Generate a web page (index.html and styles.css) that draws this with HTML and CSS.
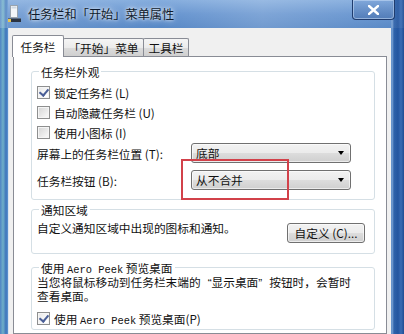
FILE: index.html
```html
<!DOCTYPE html>
<html lang="zh-CN">
<head>
<meta charset="utf-8">
<link rel="stylesheet" href="styles.css">
</head>
<body>
<div class="window">
  <div class="titlebar">
    <svg class="app-icon" width="13" height="18" viewBox="0 0 13 18">
      <rect x="2.5" y="0.5" width="7" height="12" fill="#f4f6f8" stroke="#9aa4ae"/>
      <rect x="3.5" y="1.5" width="5" height="2" fill="#cfd8e2"/>
      <rect x="0" y="13" width="13" height="4" fill="#2b3442"/>
      <rect x="0" y="13" width="3" height="4" fill="#e8c650"/>
      <rect x="0" y="13" width="13" height="1" fill="#5b6b80"/>
    </svg>
    <span class="title">任务栏和「开始」菜单属性</span>
    <div class="close">
      <svg width="11" height="10" viewBox="0 0 11 10"><path d="M1 1 L10 9 M10 1 L1 9" stroke="#fff" stroke-width="2.4" stroke-linecap="square"/></svg>
    </div>
  </div>
  <div class="client">
    <div class="tabs">
      <div class="tab active t1">任务栏</div>
      <div class="tab t2">「开始」菜单</div>
      <div class="tab t3">工具栏</div>
    </div>
    <div class="panel">
      <fieldset class="group g1">
        <legend>任务栏外观</legend>
        <div class="check-row"><span class="cb checked"></span><span>锁定任务栏 (L)</span></div>
        <div class="check-row"><span class="cb"></span><span>自动隐藏任务栏 (U)</span></div>
        <div class="check-row"><span class="cb"></span><span>使用小图标 (I)</span></div>
        <div class="select-row first"><span class="sel-label">屏幕上的任务栏位置 (T):</span><div class="select"><span>底部</span><span class="arrow"></span></div></div>
        <div class="select-row"><span class="sel-label">任务栏按钮 (B):</span><div class="select"><span>从不合并</span><span class="arrow"></span></div></div>
        <div class="highlight"></div>
      </fieldset>
      <fieldset class="group g2">
        <legend>通知区域</legend>
        <div class="notify-row">
          <span class="notify-text">自定义通知区域中出现的图标和通知。</span>
          <div class="button">自定义 (C)...</div>
        </div>
      </fieldset>
      <fieldset class="group g3">
        <legend>使用 <span class="mono">Aero Peek</span> 预览桌面</legend>
        <p class="desc">当您将鼠标移动到任务栏末端的<span class="ql">“</span>显示桌面<span class="qr">”</span>按钮时，会暂时<br>查看桌面。</p>
        <div class="check-row"><span class="cb checked"></span><span>使用 <span class="mono">Aero Peek</span> 预览桌面(P)</span></div>
      </fieldset>
    </div>
  </div>
</div>
</body>
</html>
```

FILE: styles.css
```css
* { box-sizing: border-box; }
html, body { margin: 0; padding: 0; }
body {
  width: 404px;
  height: 334px;
  overflow: hidden;
  font-family: "Noto Sans CJK SC", sans-serif;
  font-size: 11.7px;
  color: #111;
}
.window {
  height: 334px;
  display: flex;
  flex-direction: column;
  background:
    linear-gradient(90deg, #4f83c4 0px, #6fb0c8 3px, #3d74bb 6px, #5f95d0 8px, transparent 8px, transparent 391px, #7fa6d6 392px, #2e62aa 394px, #2456a0 398px, #3a6cb4 401px, #1f4d93 404px),
    linear-gradient(180deg, #7fa9dc 0px, #5f8fcd 14px, #4f82c3 28px, #4a7ec0 100%);
}
.titlebar {
  height: 28px;
  flex: none;
  display: flex;
  align-items: flex-start;
  padding-left: 8px;
  padding-right: 9px;
  background: linear-gradient(90deg, rgba(255,255,255,0.18), rgba(255,255,255,0.05) 40%, rgba(255,255,255,0.2) 65%, rgba(255,255,255,0.05));
}
.app-icon { margin-top: 5px; flex: none; }
.title {
  margin-left: 7px;
  margin-top: 6px;
  font-size: 12.2px;
  line-height: 16px;
  color: #0e1a2c;
  text-shadow: 0 0 6px rgba(255,255,255,0.9), 0 0 3px rgba(255,255,255,0.8);
}
.close {
  margin-left: auto;
  width: 43px;
  height: 20px;
  border: 1px solid #1f3c6e;
  border-top: none;
  border-radius: 0 0 4px 4px;
  box-shadow: inset 0 0 0 1px rgba(200,220,245,0.55);
  background: linear-gradient(180deg, rgba(120,160,215,0.5), rgba(70,110,170,0.6));
  display: flex;
  align-items: center;
  justify-content: center;
}
.close svg { margin-top: 1px; }
.client {
  flex: 1;
  margin: 0 13px 0 8px;
  background: #f0f0f0;
  padding: 7px 4px 0 4px;
  display: flex;
  flex-direction: column;
  border-left: 1px solid #d8e4f0;
}
.tabs {
  display: flex;
  align-items: flex-end;
  height: 21px;
  position: relative;
  z-index: 2;
}
.tab {
  height: 18px;
  border: 1px solid #898c95;
  border-bottom: none;
  margin-left: -1px;
  background: linear-gradient(180deg, #f5f5f5, #ebebeb 50%, #dcdcdc 51%, #cfcfcf);
  display: flex;
  align-items: center;
  justify-content: center;
  line-height: 14px;
  padding-top: 1px;
  border-radius: 2px 2px 0 0;
}
.tab.active {
  height: 22px;
  margin-bottom: -1px;
  background: #fff;
  padding-top: 0;
  margin-left: -1px;
  z-index: 3;
}
.t1 { width: 52px; }
.t2 { width: 81px; }
.t3 { width: 46px; }
.panel {
  flex: 1;
  border: 1px solid #898c95;
  background: #fff;
  padding: 6px 11px 0 17px;
  display: flex;
  flex-direction: column;
}
.group {
  margin: 0;
  border: 1px solid #d5dfe5;
  border-radius: 3px;
  padding: 0 9px 0 5px;
  min-width: 0;
  position: relative;
}
.group legend {
  padding: 0 2px;
  margin-left: 2px;
  line-height: 17px;
  height: 17px;
}
.mono {
  font-family: "Liberation Mono", monospace;
  font-size: 10.4px;
}
.check-row {
  height: 20px;
  display: flex;
  align-items: center;
  gap: 4px;
}
.cb {
  width: 13px;
  height: 13px;
  border: 1px solid #8e8f8f;
  background: linear-gradient(135deg, #d4d4d4, #f4f4f4 80%);
  box-shadow: inset 0 0 0 1px #f5f5f5;
  position: relative;
  flex: none;
}
.cb.checked {
  background: linear-gradient(135deg, #e6e6e6, #ffffff 80%);
}
.cb.checked::after {
  content: "";
  position: absolute;
  left: 3px;
  top: 0px;
  width: 4px;
  height: 7px;
  border-right: 2px solid #4a5f97;
  border-bottom: 2px solid #4a5f97;
  transform: rotate(40deg);
}
.g1 { padding-top: 2px; padding-bottom: 9px; }
.select-row {
  display: flex;
  align-items: center;
  height: 20px;
  margin-top: 7px;
}
.select-row.first { margin-top: 1px; }
.sel-label { width: 154px; flex: none; }
.select {
  width: 160px;
  height: 20px;
  border: 1px solid #707070;
  border-radius: 3px;
  background: linear-gradient(180deg, #f2f2f2, #ebebeb 50%, #dddddd 51%, #cfcfcf);
  box-shadow: inset 0 0 0 1px rgba(255,255,255,0.6);
  display: flex;
  align-items: center;
  padding-left: 4px;
  padding-right: 6px;
  line-height: 14px;
}
.arrow {
  margin-left: auto;
  width: 0;
  height: 0;
  border-left: 3.5px solid transparent;
  border-right: 3.5px solid transparent;
  border-top: 4px solid #000;
}
.highlight {
  position: absolute;
  left: 149px;
  top: 79px;
  width: 108px;
  height: 41px;
  border: 2px solid #d2414a;
  pointer-events: none;
}
.g2 { margin-top: 1px; padding-bottom: 10px; }
.notify-row {
  display: flex;
  align-items: flex-start;
}
.notify-text { line-height: 20px; }
.button {
  margin-left: auto;
  margin-top: 5px;
  width: 78px;
  height: 20px;
  border: 1px solid #707070;
  border-radius: 3px;
  background: linear-gradient(180deg, #f2f2f2, #ebebeb 50%, #dddddd 51%, #cfcfcf);
  box-shadow: inset 0 0 0 1px rgba(255,255,255,0.6);
  display: flex;
  align-items: center;
  justify-content: center;
  line-height: 14px;
}
.g3 { margin-top: 5px; padding-bottom: 1px; }
.desc {
  margin: 0;
  font-family: "Liberation Sans", "Noto Sans CJK SC", sans-serif;
  line-height: 14px;
}
.ql { padding-left: 7px; }
.qr { padding-right: 7px; }
.g3 .check-row { margin-top: 4px; }
```
